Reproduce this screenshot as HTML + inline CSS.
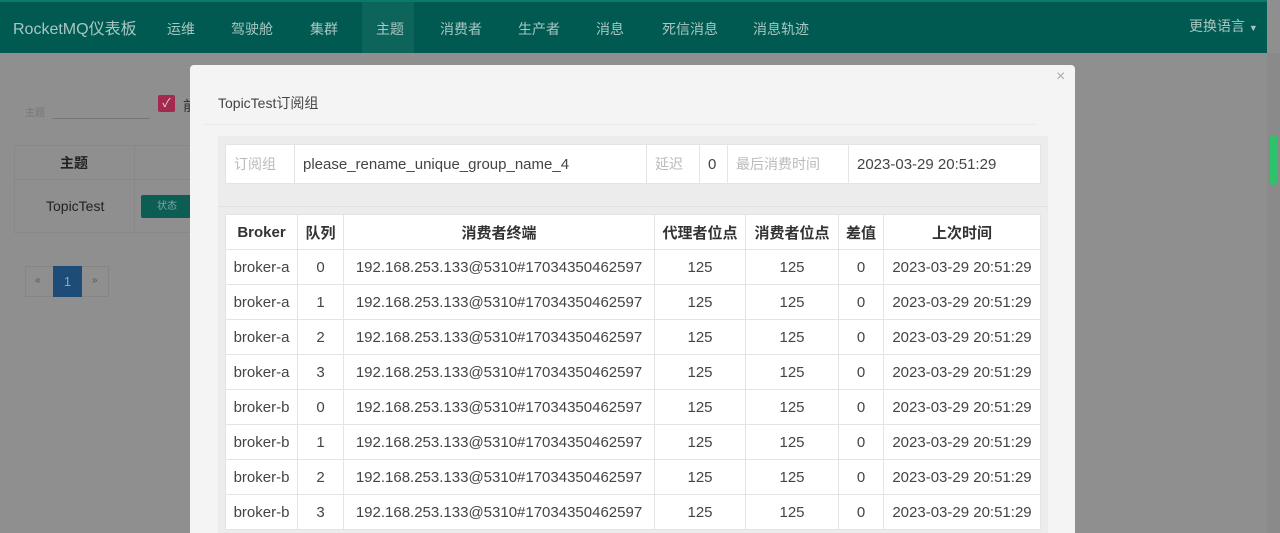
<!DOCTYPE html>
<html><head><meta charset="utf-8"><style>
*{box-sizing:border-box;margin:0;padding:0}
html,body{width:1280px;height:533px;overflow:hidden}
body{background:#8f8f8f;font-family:"Liberation Sans","Noto Sans CJK SC",sans-serif;position:relative;color:#333}
.a{position:absolute}
.nav{left:0;top:0;width:1267px;height:53px;background:#005a52;border-top:2px solid #0b7a6e}
.nav span{position:absolute;top:17px;font-size:14px;color:#a9c6c1}
.modal{left:190px;top:65px;width:885px;height:468px;background:#f4f4f4;border-radius:4px 4px 0 0}
.panel{left:218px;top:136px;width:830px;height:397px;background:#ececec}
table{border-collapse:collapse;background:#fff;font-size:15px;color:#444}
td,th{border:1px solid #e4e4e4;text-align:center;padding:0}
th{font-weight:bold;color:#333;height:35px}
td{height:35px}
.info td{height:39px;text-align:left;padding-left:8px}
.lbl{color:#bbb;font-size:14px}
</style></head><body>
<div class="a" style="left:25px;top:104px;font-size:10px;color:#777">主题</div>
<div class="a" style="left:52px;top:118px;width:98px;border-top:1px solid #777"></div>
<div class="a" style="left:158px;top:95px;width:17px;height:17px;background:#a3294f;border-radius:2px;color:#ddd;font-size:12px;text-align:center;line-height:17px">✓</div>
<div class="a" style="left:183px;top:96px;font-size:14px;color:#333">前</div>
<div class="a" style="left:14px;top:145px;width:180px;height:88px;border:1px solid #888"></div>
<div class="a" style="left:134px;top:145px;width:1px;height:88px;background:#888"></div>
<div class="a" style="left:14px;top:179px;width:180px;height:1px;background:#888"></div>
<div class="a" style="left:60px;top:153px;font-size:14px;font-weight:bold;color:#222">主题</div>
<div class="a" style="left:46px;top:198px;font-size:14px;color:#222">TopicTest</div>
<div class="a" style="left:141px;top:195px;width:52px;height:23px;background:#0c5e55;border-radius:2px;color:#7fa8a2;font-size:10px;text-align:center;line-height:23px">状态</div>
<div class="a" style="left:25px;top:266px;width:84px;height:31px;border:1px solid #858585"></div>
<div class="a" style="left:35px;top:275px;font-size:10px;color:#555">«</div>
<div class="a" style="left:53px;top:266px;width:29px;height:31px;background:#1d4c78;color:#88a8c8;font-size:13px;text-align:center;line-height:31px">1</div>
<div class="a" style="left:92px;top:275px;font-size:10px;color:#555">»</div>
<div class="a nav">
<span style="left:13px;top:13px;font-size:16px">RocketMQ仪表板</span>
<div class="a" style="left:362px;top:0;width:52px;height:51px;background:#0d645b"></div>
<span style="left:167px">运维</span><span style="left:231px">驾驶舱</span><span style="left:310px">集群</span><span style="left:376px">主题</span><span style="left:440px">消费者</span><span style="left:518px">生产者</span><span style="left:596px">消息</span><span style="left:662px">死信消息</span><span style="left:753px">消息轨迹</span><span style="left:1189px;top:14px">更换语言 <small style="font-size:9px">▼</small></span>
</div>
<div class="a" style="left:1267px;top:53px;width:13px;height:480px;background:#8a8a8a"></div>
<div class="a" style="left:1270px;top:135px;width:7px;height:50px;background:#2ec26a;border-radius:3px"></div>
<div class="a modal"></div>
<div class="a" style="left:1056px;top:68px;font-size:16px;color:#aaa">×</div>
<div class="a" style="left:218px;top:93px;font-size:14px;color:#444">TopicTest订阅组</div>
<div class="a" style="left:205px;top:124px;width:830px;height:1px;background:#e8e8e8"></div>
<div class="a panel"></div>
<table class="a info" style="left:225px;top:144px;width:816px">
<tr><td class="lbl" style="width:69px">订阅组</td><td style="width:352px">please_rename_unique_group_name_4</td><td class="lbl" style="width:53px">延迟</td><td style="width:28px">0</td><td class="lbl" style="width:121px">最后消费时间</td><td>2023-03-29 20:51:29</td></tr>
</table>
<div class="a" style="left:218px;top:206px;width:830px;height:1px;background:#e0e0e0"></div>
<table class="a" style="left:225px;top:214px;width:816px">
<tr><th style="width:72px">Broker</th><th style="width:46px">队列</th><th style="width:311px">消费者终端</th><th style="width:91px">代理者位点</th><th style="width:93px">消费者位点</th><th style="width:45px">差值</th><th>上次时间</th></tr>
<tr><td>broker-a</td><td>0</td><td>192.168.253.133@5310#17034350462597</td><td>125</td><td>125</td><td>0</td><td>2023-03-29 20:51:29</td></tr>
<tr><td>broker-a</td><td>1</td><td>192.168.253.133@5310#17034350462597</td><td>125</td><td>125</td><td>0</td><td>2023-03-29 20:51:29</td></tr>
<tr><td>broker-a</td><td>2</td><td>192.168.253.133@5310#17034350462597</td><td>125</td><td>125</td><td>0</td><td>2023-03-29 20:51:29</td></tr>
<tr><td>broker-a</td><td>3</td><td>192.168.253.133@5310#17034350462597</td><td>125</td><td>125</td><td>0</td><td>2023-03-29 20:51:29</td></tr>
<tr><td>broker-b</td><td>0</td><td>192.168.253.133@5310#17034350462597</td><td>125</td><td>125</td><td>0</td><td>2023-03-29 20:51:29</td></tr>
<tr><td>broker-b</td><td>1</td><td>192.168.253.133@5310#17034350462597</td><td>125</td><td>125</td><td>0</td><td>2023-03-29 20:51:29</td></tr>
<tr><td>broker-b</td><td>2</td><td>192.168.253.133@5310#17034350462597</td><td>125</td><td>125</td><td>0</td><td>2023-03-29 20:51:29</td></tr>
<tr><td>broker-b</td><td>3</td><td>192.168.253.133@5310#17034350462597</td><td>125</td><td>125</td><td>0</td><td>2023-03-29 20:51:29</td></tr>
</table>
</body></html>
